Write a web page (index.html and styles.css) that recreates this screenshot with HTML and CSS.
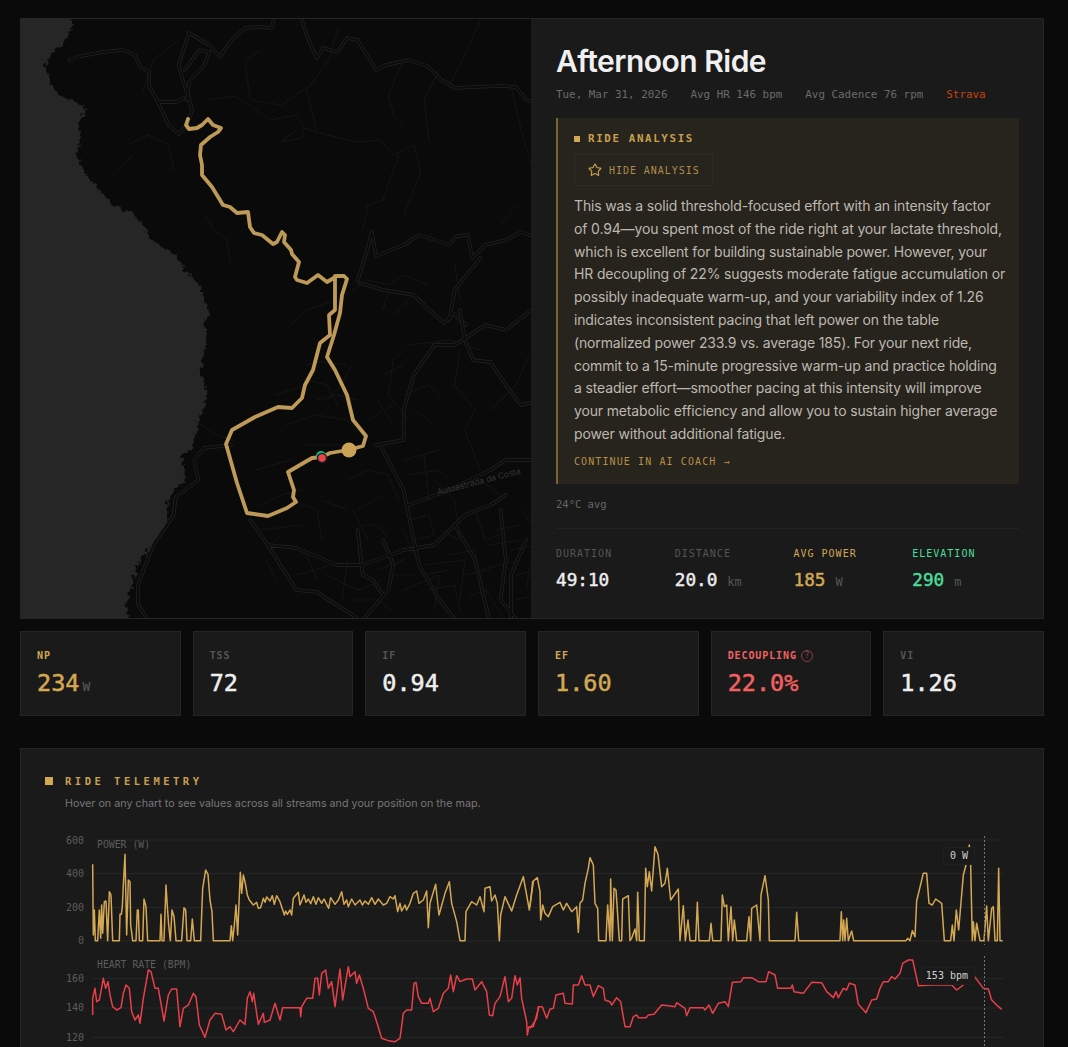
FILE: index.html
```html
<!DOCTYPE html>
<html lang="en">
<head>
<meta charset="utf-8">
<title>Afternoon Ride</title>
<link rel="stylesheet" href="styles.css">
</head>
<body>
<div class="page">
  <section class="hero">
    <div class="map">
      <svg class="map-svg" viewBox="21 19 510 599" width="510" height="599" xmlns="http://www.w3.org/2000/svg">
        <defs>
          <filter id="coast" x="-5%" y="-5%" width="110%" height="110%" color-interpolation-filters="sRGB">
            <feTurbulence type="fractalNoise" baseFrequency=".22" numOctaves="2" seed="4"/>
            <feDisplacementMap in="SourceGraphic" scale="9" xChannelSelector="R" yChannelSelector="G"/>
          </filter>
          <path id="majorA" d="M68 60 L80 56 L100 52 L120 50 L132 55 L138 68 L146 72 L146 86 L155 103 L165 125 L175 134 L183 125 L188 110 L185 98 L179 80 L175 65 L178 55 L185 33 L205 45 L215 57 L225 42 L240 28 L255 27 L266 28 L268 19 M181 70 L195 50 L205 52 L200 65 L185 82 L183 100 M155 102 L172 102 L180 98 M295 19 L302 40 L310 58 L316 48 L330 52 L340 38 L350 40 L368 70 L378 65 L400 60 L418 66 L432 80 L445 88 L465 87 L490 86 L505 87 L515 100 L531 105 M350 281 L358 255 L364 232 L368 256 L395 245 L410 235 L425 240 L440 245 L447 236 L458 235 L462 258 L475 245 L495 240 L510 232 L531 240 M352 283 L375 290 L405 295 L420 310 L435 323 L443 313 L456 325 M470 258 L445 290 L440 320"/>
          <path id="majorB" d="M450 310 L455 340 L463 360 L480 362 L495 385 L510 405 L531 400 M535 305 L520 310 L495 330 L475 325 L445 345 L425 345 L405 375 L395 410 L395 440 L368 445 M226 445 L200 448 L190 460 L194 480 L172 497 L170 515 L150 545 L135 585 L135 605 L148 625 M245 520 L262 545 L290 548 L330 565 L355 565 L395 550 L425 545 L445 525 L455 515 L480 505 L495 495 M262 545 L290 590 L310 592 L345 615 L355 625 M372 445 L395 490 L410 565 L430 600 L450 625 M400 505 L440 490 L480 470 L495 460 L531 460 M350 530 L355 575 L365 580 L375 595 M375 540 L385 565 L380 590 L355 620 M445 525 L465 560 L480 625 M490 510 L495 560 L490 600 L510 625 M515 540 L500 575 L500 625"/>
          <path id="minorA" d="M140 90 L150 60 L175 40 M125 145 L145 135 L165 145 L170 170 M115 170 L130 155 M240 60 L255 50 M240 65 L245 100 L275 105 L300 88 M205 100 L230 96 L265 120 L290 115 L298 128 L295 138 L275 142 L290 130 M298 128 L320 135 L350 142 L372 140 L385 155 L405 145 L412 172 L395 215 M330 30 L322 60 L300 90 L310 130 M395 60 L380 95 L385 115 L395 125 M430 70 L415 100 L420 140 M470 20 L455 55 L440 85 M500 85 L510 130 L520 165 M200 215 L210 230 L222 240 L225 260 M355 230 L360 205 L375 200 L390 155 M505 205 L490 225 M445 265 L450 300 M345 290 L360 280 L380 285 L395 275 L420 285 M380 290 L375 310 M400 300 L385 315 M330 300 L300 310 L285 325"/>
          <path id="minorB" d="M190 420 L212 435 L228 440 M300 365 L315 362 L340 365 M345 365 L330 390 L320 400 M300 380 L320 385 L330 405 M280 425 L310 415 L340 420 L360 440 M300 445 L335 445 M250 470 L285 460 M255 505 L275 495 L295 490 M260 560 L270 580 M265 545 L275 535 M310 400 L330 395 L350 400 M340 480 L360 470 L380 475 L390 500 M350 510 L375 495 M355 525 L370 525 L380 540 M395 350 L385 360 L380 395 L400 420 M400 345 L440 340 L470 350 M450 350 L445 385 L465 410 L455 430 L470 470 M470 480 L490 495 M480 410 L505 385 L520 350 M395 365 L375 375 M300 555 L310 580 M290 575 L325 565 M340 560 L335 600 M320 575 L350 590 M370 570 L395 560 M360 540 L345 510 M395 590 L430 575 L425 610 M415 565 L455 560 L450 600 M430 530 L450 540 L445 500 L425 480 M465 510 L475 540 L500 530 M470 570 L510 560 M475 590 L495 620 M510 510 L525 530 L515 590 M395 460 L430 450 M415 455 L420 500 M270 395 L300 385 M285 500 L310 510 L315 540 M315 500 L340 510 M255 530 L295 525 M400 520 L420 515 L425 535 L405 540 M415 575 L440 570 M420 590 L445 585 L450 610 M440 555 L465 550 L470 580 M455 575 L480 570 M460 595 L480 590 M485 530 L510 525 M480 545 L510 540 M500 550 L525 545 M505 575 L525 570 M505 600 L525 595 M350 590 L375 580 M345 600 L370 600 L385 612 M385 575 L405 575 M395 530 L405 555 M360 420 L385 405 M370 400 L385 425 M395 395 L420 385 L430 395 M405 410 L425 425 M400 475 L430 470 L440 480"/>
        </defs>
        <rect class="land" x="21" y="19" width="510" height="599"/>
        <g transform="scale(1.0218 1)">
          <polygon class="sea" filter="url(#coast)" points="0,0 71,0 70,30 60,45 52,50 44,66 48,80 57,95 80,105 84,110 77,122 79,140 74,155 85,175 98,190 110,205 128,212 140,225 150,240 175,258 180,270 195,285 200,300 205,315 200,320 203,340 198,360 197,372 203,397 195,420 187,450 178,455 182,480 170,490 163,505 165,520 157,535 137,560 127,590 123,605 130,640 0,640"/>
          <use href="#majorA" class="casing"/>
          <use href="#majorA" class="inner"/>
          <use href="#minorA" class="minor"/>
          <use href="#majorB" class="casing"/>
          <use href="#majorB" class="inner"/>
          <use href="#minorB" class="minor"/>
        </g>
        <text class="map-label" x="438" y="495" transform="rotate(-14.5 438 495)">Autoestrada da Costa</text>
        <path class="route" d="M188 119 L186 125 L189 129 L197 128 L202 125 L208 119 L213 125 L221 128 L218 132 L210 137 L201 145 L200 155 L202 165 L202 175 L212 187 L223 205 L230 207 L237 213 L248 212 L250 227 L254 233 L262 235 L273 244 L277 242 L282 232 L285 235 L284 242 L291 250 L292 254 L299 262 L295 277 L297 280 L307 283 L318 275 L327 282 L337 276 L344 276 L347 279 L342 295 L340 313 L334 335 L327 357 L335 370 L347 395 L353 420 L366 436 L363 446 L348 450 L330 453 L322 457 L312 458 L288 472 L294 490 L293 497 L296 502 L287 508 L268 516 L247 513 L237 483 L226 444 L232 430 L255 417 L278 407 L292 408 L302 398 L305 385 L313 370 L320 343 L330 335 L329 315 L335 310 L335 276"/>
        <circle class="marker-now" cx="349" cy="450" r="7.5"/>
        <circle class="marker-start" cx="321" cy="456" r="5"/>
        <circle class="marker-end" cx="322" cy="458" r="4.5"/>
      </svg>
    </div>
    <div class="panel">
      <h1 class="title">Afternoon Ride</h1>
      <div class="meta">
        <span>Tue, Mar 31, 2026</span>
        <span>Avg HR 146 bpm</span>
        <span>Avg Cadence 76 rpm</span>
        <span class="strava">Strava</span>
      </div>
      <div class="analysis">
        <div class="analysis-head"><i class="square"></i>RIDE ANALYSIS</div>
        <button class="analysis-btn" type="button">
          <svg class="star" viewBox="0 0 24 24" width="14" height="14" xmlns="http://www.w3.org/2000/svg"><path d="M11.525 2.295a.53.53 0 0 1 .95 0l2.31 4.679a2.123 2.123 0 0 0 1.595 1.16l5.166.756a.53.53 0 0 1 .294.904l-3.736 3.638a2.123 2.123 0 0 0-.611 1.878l.882 5.14a.53.53 0 0 1-.771.56l-4.618-2.428a2.122 2.122 0 0 0-1.973 0L6.396 21.01a.53.53 0 0 1-.77-.56l.881-5.139a2.122 2.122 0 0 0-.611-1.879L2.16 9.795a.53.53 0 0 1 .294-.906l5.165-.755a2.122 2.122 0 0 0 1.597-1.16z"/></svg>
          <span>HIDE ANALYSIS</span>
        </button>
        <p class="analysis-text">This was a solid threshold-focused effort with an intensity factor<br>of 0.94—you spent most of the ride right at your lactate threshold,<br>which is excellent for building sustainable power. However, your<br>HR decoupling of 22% suggests moderate fatigue accumulation or<br>possibly inadequate warm-up, and your variability index of 1.26<br>indicates inconsistent pacing that left power on the table<br>(normalized power 233.9 vs. average 185). For your next ride,<br>commit to a 15-minute progressive warm-up and practice holding<br>a steadier effort—smoother pacing at this intensity will improve<br>your metabolic efficiency and allow you to sustain higher average<br>power without additional fatigue.</p>
        <a class="analysis-link" href="#">CONTINUE IN AI COACH →</a>
      </div>
      <div class="temp">24°C avg</div>
      <div class="stats">
        <div class="stat"><div class="stat-label">DURATION</div><div class="stat-value">49:10</div></div>
        <div class="stat"><div class="stat-label">DISTANCE</div><div class="stat-value">20.0<span class="stat-unit">km</span></div></div>
        <div class="stat"><div class="stat-label gold">AVG POWER</div><div class="stat-value gold">185<span class="stat-unit">W</span></div></div>
        <div class="stat"><div class="stat-label green">ELEVATION</div><div class="stat-value green">290<span class="stat-unit">m</span></div></div>
      </div>
    </div>
  </section>

  <section class="kpis">
    <div class="kpi"><div class="kpi-label gold">NP</div><div class="kpi-value gold">234<span class="kpi-unit">W</span></div></div>
    <div class="kpi"><div class="kpi-label">TSS</div><div class="kpi-value">72</div></div>
    <div class="kpi"><div class="kpi-label">IF</div><div class="kpi-value">0.94</div></div>
    <div class="kpi"><div class="kpi-label gold">EF</div><div class="kpi-value gold">1.60</div></div>
    <div class="kpi"><div class="kpi-label red">DECOUPLING<span class="help">?</span></div><div class="kpi-value red">22.0%</div></div>
    <div class="kpi"><div class="kpi-label">VI</div><div class="kpi-value">1.26</div></div>
  </section>

  <section class="telemetry">
    <div class="tele-head"><i class="tele-square"></i>RIDE TELEMETRY</div>
    <p class="tele-hint">Hover on any chart to see values across all streams and your position on the map.</p>
    <svg class="chart" viewBox="21 830 1022 120" width="1022" height="120" xmlns="http://www.w3.org/2000/svg">
      <path class="grid" d="M93 840H1003M93 873.5H1003M93 907.5H1003M93 941H1003"/>
      <text class="axis" x="84" y="844">600</text>
      <text class="axis" x="84" y="877">400</text>
      <text class="axis" x="84" y="911">200</text>
      <text class="axis" x="84" y="944">0</text>
      <text class="chart-title" x="97" y="848">POWER (W)</text>
      <g transform="translate(40 825) scale(.33333)">
        <path class="line power" d="M158 118 L160 330 L163 255 L166 347 L173 347 L178 255 L182 340 L185 240 L188 325 L193 230 L198 228 L203 347 L208 200 L213 210 L218 347 L238 347 L240 268 L244 268 L247 245 L250 180 L255 88 L260 330 L265 165 L270 170 L272 300 L278 347 L288 347 L292 255 L295 255 L298 347 L308 347 L312 222 L318 245 L323 347 L360 347 L363 268 L366 347 L372 347 L378 180 L381 230 L386 300 L391 347 L396 255 L402 275 L408 347 L425 347 L432 248 L437 255 L441 347 L452 347 L457 282 L463 347 L482 347 L488 190 L497 135 L504 148 L510 225 L516 260 L520 347 L570 347 L574 302 L578 347 L583 300 L588 240 L593 330 L601 142 L605 205 L610 150 L616 175 L622 210 L628 225 L640 240 L650 232 L655 250 L662 248 L670 220 L675 232 L680 216 L690 228 L697 212 L703 238 L710 212 L720 230 L733 270 L737 258 L742 268 L750 255 L755 270 L760 220 L775 202 L780 240 L792 210 L798 232 L805 222 L812 236 L820 215 L828 238 L835 218 L845 235 L852 222 L860 238 L866 250 L872 218 L885 238 L895 225 L905 200 L912 238 L920 225 L925 245 L935 222 L945 240 L960 225 L967 240 L975 228 L985 238 L995 218 L1005 238 L1015 222 L1030 240 L1040 235 L1050 215 L1060 222 L1065 212 L1073 260 L1080 235 L1085 258 L1095 240 L1100 255 L1110 235 L1120 205 L1130 198 L1137 235 L1150 225 L1160 198 L1165 308 L1170 235 L1187 178 L1197 270 L1215 205 L1228 170 L1235 235 L1250 290 L1260 347 L1275 347 L1278 260 L1295 230 L1310 240 L1320 215 L1332 260 L1335 190 L1350 185 L1355 228 L1365 210 L1372 235 L1378 347 L1382 270 L1395 215 L1415 258 L1430 210 L1450 155 L1468 255 L1480 170"/>
      </g>
      <g transform="translate(530 825) scale(.33333)">
        <path class="line power" d="M0 245 L8 170 L22 158 L30 200 L32 285 L38 240 L45 265 L55 275 L68 245 L90 232 L100 255 L110 235 L125 260 L140 245 L145 322 L150 235 L158 225 L165 175 L175 130 L180 98 L190 120 L195 235 L203 250 L206 347 L228 347 L233 240 L240 347 L242 162 L247 347 L252 190 L258 195 L262 255 L268 347 L275 347 L278 222 L295 212 L300 347 L305 340 L315 312 L320 347 L323 202 L328 347 L343 347 L347 130 L352 185 L358 140 L365 198 L375 65 L384 88 L395 185 L405 175 L412 130 L422 225 L445 192 L450 347 L460 242 L466 347 L474 285 L480 347 L497 347 L502 232 L507 347 L538 347 L543 295 L548 347 L573 347 L577 210 L583 245 L590 240 L595 347 L603 245 L608 347 L613 285 L620 347 L650 347 L657 275 L662 347 L665 250 L680 240 L690 347 L693 210 L705 152 L715 225 L718 347 L795 347 L800 262 L806 347 L930 347 L934 260 L938 347 L941 285 L945 347 L950 280 L955 347 L965 318 L971 347 L1128 347 L1133 340 L1140 347 L1147 317 L1155 335 L1160 228 L1180 145 L1190 145 L1197 235 L1207 240 L1217 222 L1235 235 L1243 347 L1262 347 L1267 300 L1272 347 L1279 255 L1286 315 L1300 150 L1308 120 L1318 60 L1322 120 L1327 347 L1330 290 L1335 347 L1340 295 L1350 347 L1362 347 L1370 243 L1375 347 L1380 300 L1385 250 L1390 245 L1395 347 L1402 347 L1406 130 L1410 347 L1418 347"/>
      </g>
      <line class="cross" x1="984.5" y1="836" x2="984.5" y2="945"/>
      <rect class="tip" x="943.5" y="847.5" width="31" height="17" rx="2"/>
      <text class="tip-text" x="968" y="859">0 W</text>
    </svg>
    <svg class="chart" viewBox="21 950 1022 97" width="1022" height="97" xmlns="http://www.w3.org/2000/svg">
      <path class="grid" d="M93 978.5H1003M93 1008H1003M93 1037.5H1003"/>
      <text class="axis" x="84" y="982">160</text>
      <text class="axis" x="84" y="1011">140</text>
      <text class="axis" x="84" y="1041">120</text>
      <text class="chart-title" x="97" y="968">HEART RATE (BPM)</text>
      <g transform="translate(40 825) scale(.33333)">
        <path class="line hr" d="M158 570 L158 520 L165 490 L170 530 L178 525 L190 460 L197 490 L204 470 L210 510 L218 545 L230 555 L243 548 L250 505 L258 480 L268 490 L275 560 L285 585 L295 570 L300 595 L310 520 L325 435 L333 440 L345 490 L355 490 L372 588 L385 510 L395 492 L410 492 L420 605 L430 550 L445 540 L460 505 L468 515 L478 600 L495 637 L510 585 L525 565 L545 568 L558 615 L570 605 L580 620 L600 585 L615 598 L622 520 L630 500 L637 530 L641 505 L655 598 L670 565 L673 592 L690 585 L705 535 L720 585 L728 548 L780 548 L782 575 L785 545 L800 520 L818 520 L825 460 L833 460 L838 510 L845 445 L857 435 L865 490 L875 470 L885 545 L900 432 L908 525 L925 425 L930 455 L945 440 L950 475 L958 450 L970 490 L985 550 L1000 560 L1010 590 L1025 640 L1045 647 L1065 650 L1080 640 L1090 565 L1100 555 L1115 555 L1122 475 L1128 472 L1135 515 L1145 535 L1165 535 L1170 520 L1180 560 L1195 550 L1210 505 L1225 490 L1232 450 L1240 500 L1250 452 L1260 470 L1280 462 L1297 462 L1305 495 L1325 470 L1340 500 L1348 570 L1358 572 L1365 535 L1380 515 L1395 455 L1405 530 L1415 520 L1425 452 L1432 480 L1440 458 L1445 520 L1460 590 L1462 630 L1467 605 L1480 605 L1497 545"/>
      </g>
      <g transform="translate(530 825) scale(.33333)">
        <path class="line hr" d="M0 610 L20 580 L25 545 L37 545 L50 580 L60 553 L70 550 L78 510 L100 505 L105 535 L127 537 L130 480 L145 480 L155 452 L165 480 L180 480 L190 515 L205 482 L220 490 L225 525 L240 530 L245 540 L260 518 L272 530 L285 605 L300 605 L310 575 L320 570 L325 578 L348 578 L355 570 L372 568 L380 558 L395 540 L415 542 L435 545 L440 533 L465 550 L470 572 L480 548 L520 548 L525 555 L537 540 L548 565 L565 535 L585 530 L595 545 L607 472 L633 470 L640 458 L665 458 L685 470 L708 470 L716 440 L735 450 L743 490 L782 490 L787 480 L792 500 L820 505 L845 472 L875 473 L890 500 L910 518 L918 500 L925 518 L940 490 L950 495 L958 475 L975 480 L985 538 L1008 563 L1025 525 L1040 522 L1050 490 L1060 470 L1075 470 L1085 455 L1095 462 L1110 445 L1118 415 L1135 405 L1148 405 L1165 482 L1205 480 L1265 480 L1280 495 L1300 480 L1305 470 L1330 450 L1345 470 L1360 490 L1375 492 L1385 525 L1400 540 L1415 553"/>
      </g>
      <line class="cross" x1="984.5" y1="956" x2="984.5" y2="1047"/>
      <rect class="tip" x="921.5" y="967.5" width="53" height="17" rx="2"/>
      <text class="tip-text" x="968" y="979">153 bpm</text>
    </svg>
  </section>
</div>
</body>
</html>
```
FILE: styles.css
```css
* { box-sizing: border-box; }
html, body { margin: 0; padding: 0; background: #0a0a0a; }
body { font-family: Inter, "Noto Sans", sans-serif; color: #e8e8e8; }
.page { height: 1047px; overflow: hidden; padding: 18px 24px 0 20px; }

.hero { display: flex; height: 601px; border: 1px solid #262626; background: #1a1a1a; }
.map { width: 510px; flex: none; overflow: hidden; }
.map-svg { display: block; }
.land { fill: #0a0a0a; }
.sea { fill: #262626; }
.casing, .inner, .minor { fill: none; stroke-linejoin: round; stroke-linecap: round; }
.casing { stroke: #232323; stroke-width: 3.4; }
.inner { stroke: #0b0b0b; stroke-width: 2; }
.minor { stroke: #181818; stroke-width: .8; }
.map-label { font-family: Inter, sans-serif; font-size: 8.4px; fill: #343434; }
.route { fill: none; stroke: #bd9a58; stroke-width: 3.8; stroke-linejoin: round; stroke-linecap: round; }
.marker-now { fill: #c9a455; }
.marker-start { fill: #10b981; }
.marker-end { fill: #ef4444; stroke: #1b2130; stroke-width: 1.5; }

.panel { flex: 1; min-width: 0; padding: 24px 24px 0 25px; }
.title { margin: 0; font-size: 30px; line-height: 36px; font-weight: 600; letter-spacing: -.5px; color: #f0f0f0; }
.meta { display: flex; gap: 23px; margin-top: 8px; font-family: "DejaVu Sans Mono", monospace; font-size: 10.9px; line-height: 16px; color: #6b6b6b; }
.strava { color: #c8440f; }

.analysis { margin-top: 15px; height: 366px; padding: 14px 16px 0 16px; background: #27231d; border-left: 2px solid #7a6433; }
.analysis-head { display: flex; align-items: center; font-family: "DejaVu Sans Mono", monospace; font-size: 10.8px; line-height: 14px; font-weight: bold; letter-spacing: 1.65px; color: #c9a050; }
.square { width: 6px; height: 6px; margin-right: 8px; background: #d4a853; }
.analysis-btn { display: flex; align-items: center; gap: 7px; height: 32px; width: 139px; margin: 8px 0 0; padding: 0 13px; background: transparent; border: 1px solid #2f2b24; font-family: "DejaVu Sans Mono", monospace; font-size: 10px; letter-spacing: .95px; color: #ae8d4e; white-space: nowrap; }
.star { fill: none; stroke: #c9a050; stroke-width: 2; flex: none; }
.analysis-text { margin: 9px 0 0; font-size: 14px; line-height: 22.8px; letter-spacing: -.15px; color: #bdb9b0; white-space: nowrap; }
.analysis-link { display: block; margin-top: 9px; font-family: "DejaVu Sans Mono", monospace; font-size: 10px; line-height: 14px; letter-spacing: 1.1px; color: #b98f45; text-decoration: none; }

.temp { margin-top: 13px; font-family: "DejaVu Sans Mono", monospace; font-size: 10.5px; line-height: 14px; color: #666; }
.stats { display: grid; grid-template-columns: repeat(4, 1fr); gap: 12px; margin-top: 17px; padding-top: 18px; border-top: 1px solid #222; }
.stat-label { font-family: "DejaVu Sans Mono", monospace; font-size: 10px; line-height: 14px; letter-spacing: 1px; color: #555; }
.stat-value { margin-top: 7px; font-family: "DejaVu Sans Mono", monospace; font-size: 17.7px; line-height: 24px; font-weight: normal; -webkit-text-stroke: .45px currentColor; color: #eee; }
.stat-unit { margin-left: 10px; font-size: 12px; font-weight: normal; -webkit-text-stroke: 0; color: #555; }

.kpis { display: grid; grid-template-columns: repeat(6, 1fr); gap: 12px; margin-top: 12px; }
.kpi { height: 85px; padding: 17px 16px 0; background: #1a1a1a; border: 1px solid #242424; }
.kpi-label { display: flex; align-items: center; gap: 4px; font-family: "DejaVu Sans Mono", monospace; font-size: 10px; line-height: 14px; font-weight: bold; letter-spacing: .9px; color: #555; }
.kpi-value { margin-top: 5px; font-family: "DejaVu Sans Mono", monospace; font-size: 23.5px; line-height: 30px; font-weight: normal; -webkit-text-stroke: .5px currentColor; color: #eee; }
.kpi-unit { margin-left: 3px; font-size: 13px; font-weight: normal; -webkit-text-stroke: .2px #555; color: #555; }
.help { display: inline-flex; align-items: center; justify-content: center; width: 12px; height: 12px; border: 1px solid #8a3f3f; border-radius: 50%; font-size: 8px; font-weight: normal; letter-spacing: 0; color: #8a3f3f; }

.gold { color: #d4a853; }
.green { color: #4ade9a; }
.red { color: #f26060; }

.telemetry { margin-top: 32px; padding-top: 25px; background: #1a1a1a; border: 1px solid #242424; height: 400px; }
.tele-head { display: flex; align-items: center; margin-left: 24px; font-family: "DejaVu Sans Mono", monospace; font-size: 10.5px; line-height: 14px; font-weight: bold; letter-spacing: 3.5px; color: #c9a050; }
.tele-square { width: 8px; height: 8px; margin-right: 12px; background: #d4a853; }
.tele-hint { margin: 8px 0 0 44px; font-size: 10.75px; line-height: 16px; color: #777; }
.chart { display: block; }
.tele-hint + .chart { margin-top: 18px; }
.grid { fill: none; stroke: #262626; stroke-width: 1; }
.axis { font-family: "DejaVu Sans Mono", monospace; font-size: 10px; fill: #5c5c5c; text-anchor: end; }
.chart-title { font-family: "DejaVu Sans Mono", monospace; font-size: 9.8px; fill: #5c5c5c; }
.line { fill: none; stroke-width: 4.5; stroke-linejoin: round; }
.power { stroke: #d4a853; }
.hr { stroke: #e8404a; }
.cross { stroke: #777; stroke-width: 1; stroke-dasharray: 2 2; }
.tip { fill: #1a1a1a; stroke: #202020; }
.tip-text { font-family: "DejaVu Sans Mono", monospace; font-size: 10px; fill: #cfcfcf; text-anchor: end; }
```
